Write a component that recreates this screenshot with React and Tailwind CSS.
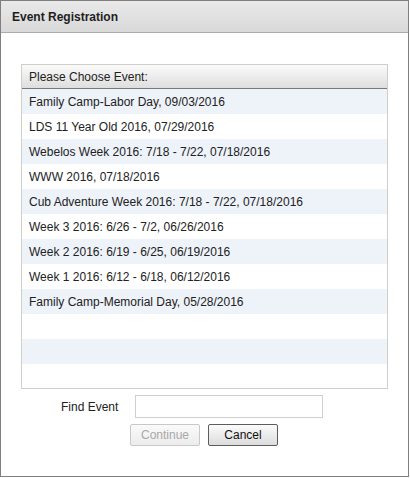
import React, { useState } from 'react';

const events = [
  'Family Camp-Labor Day, 09/03/2016',
  'LDS 11 Year Old 2016, 07/29/2016',
  'Webelos Week 2016: 7/18 - 7/22, 07/18/2016',
  'WWW 2016, 07/18/2016',
  'Cub Adventure Week 2016: 7/18 - 7/22, 07/18/2016',
  'Week 3 2016: 6/26 - 7/2, 06/26/2016',
  'Week 2 2016: 6/19 - 6/25, 06/19/2016',
  'Week 1 2016: 6/12 - 6/18, 06/12/2016',
  'Family Camp-Memorial Day, 05/28/2016',
  '',
  '',
];

function App() {
  const [search, setSearch] = useState('');

  return (
    <div className="w-[410px] h-[478px] bg-white font-['Liberation_Sans',Arial,sans-serif] text-[12px] text-[#222]">
      <div className="w-[409px] h-[477px] border border-[#7f7f7f] flex flex-col">
        <div className="h-[32px] shrink-0 bg-gradient-to-b from-[#e9e9e9] to-[#d9d9d9] border-b border-[#ababab] flex items-center px-[11px]">
          <span className="font-bold text-[12px] text-[#1e1e1e]">Event Registration</span>
        </div>

        <div className="flex flex-col pt-[31px] px-[20px]">
          <div className="w-[367px] h-[325px] border border-[#cfcfc8] flex flex-col overflow-hidden">
            <div className="h-[24px] shrink-0 bg-gradient-to-b from-[#fbfbfb] to-[#dedede] border-b border-[#7a7a7a] flex items-center px-[7px]">
              Please Choose Event:
            </div>
            {events.map((ev, i) => (
              <div
                key={i}
                className={`h-[25px] shrink-0 flex items-center px-[7px] ${i % 2 === 0 ? 'bg-[#eef2f9]' : 'bg-white'}`}
              >
                {ev}
              </div>
            ))}
          </div>
        </div>

        <div className="flex items-center mt-[6px] pl-[60px]">
          <label className="w-[74px]">Find Event</label>
          <input
            value={search}
            onChange={(e) => setSearch(e.target.value)}
            className="w-[188px] h-[23px] border border-[#cfcfcf] outline-none px-1 text-[12px]"
          />
        </div>

        <div className="flex gap-[8px] mt-[6px] pl-[129px]">
          <button disabled className="w-[70px] h-[22px] border border-[#c8c8c8] rounded-[2px] bg-gradient-to-b from-[#fafafa] to-[#ececec] text-[#a8a8a8] text-[12px]">
            Continue
          </button>
          <button className="w-[70px] h-[22px] border border-[#5c5c5c] rounded-[2px] bg-gradient-to-b from-[#fbfbfb] to-[#dcdcdc] text-[#111] text-[12px]">
            Cancel
          </button>
        </div>
      </div>
    </div>
  );
}

export default App;
